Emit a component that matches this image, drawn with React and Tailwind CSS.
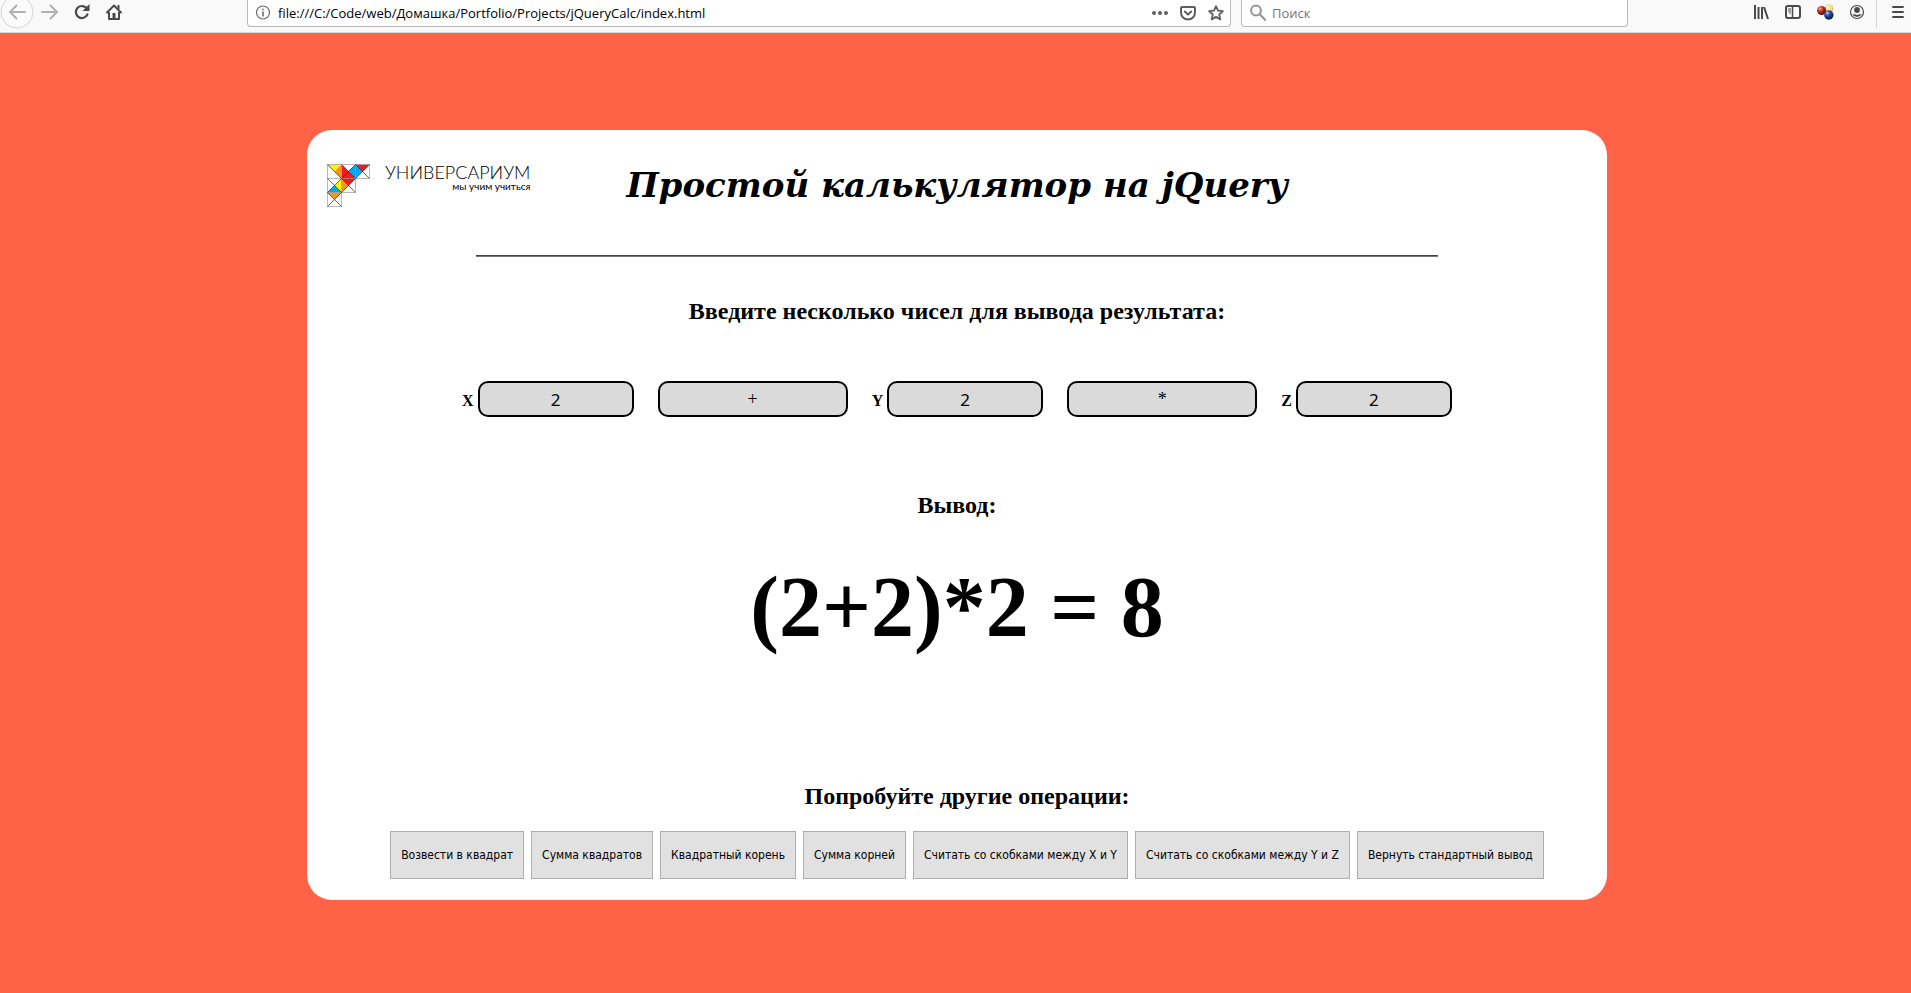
const sans = 'font-["Open_Sans",sans-serif]';

const iconButton = 'flex h-6 w-[26px] shrink-0 items-center justify-center text-[#4a4a4b]';

function NavIcons() {
  return (
    <nav aria-label="Навигация" className="flex w-[247px] shrink-0 items-start">
      <button type="button" aria-label="Назад" className="text-[#b1b1b1]">
        <svg width="34" height="30" viewBox="0 0 34 30" fill="none">
          <circle cx="17" cy="12" r="16" fill="#fbfbfb" stroke="#d4d4d4" />
          <path d="M25 12H10M16.500 5.500 10 12l6.500 6.500" stroke="currentColor" strokeWidth="2" strokeLinecap="round" strokeLinejoin="round" />
        </svg>
      </button>
      <button type="button" aria-label="Вперёд" className="ml-[7px] text-[#b1b1b1]">
        <svg width="17" height="24" viewBox="0 0 17 24" fill="none">
          <path d="M1 12h15M9.500 5.500 16 12l-6.500 6.500" stroke="currentColor" strokeWidth="2" strokeLinecap="round" strokeLinejoin="round" />
        </svg>
      </button>
      <button type="button" aria-label="Обновить" className="ml-4 text-[#4a4a4b]">
        <svg width="16" height="24" viewBox="0 0 16 24" fill="none">
          <path d="M12.800 8.500A6 6 0 1 0 13.400 14.500" stroke="currentColor" strokeWidth="2.200" strokeLinecap="round" />
          <path d="M15.500 4v7h-7z" fill="currentColor" />
        </svg>
      </button>
      <button type="button" aria-label="Домой" className="ml-4 text-[#4a4a4b]">
        <svg width="16" height="24" viewBox="0 0 16 24" fill="none" stroke="currentColor" strokeWidth="2">
          <path d="M1 12.500 8 5.500l7 7" strokeLinecap="round" strokeLinejoin="round" />
          <path d="M3 12v7h10v-7" strokeLinejoin="round" />
          <path d="M8 13v6M12.500 5v4" />
          <path d="M6.500 13h3v5h-3z" fill="currentColor" stroke="none" />
        </svg>
      </button>
    </nav>
  );
}

function AddressBar() {
  return (
    <div className="flex h-[27px] min-w-0 flex-1 items-center rounded-b-sm border border-t-0 border-[#b9b9b9] bg-white">
      <svg className="ml-[7px] shrink-0" width="16" height="16" viewBox="0 0 16 16" fill="none" stroke="#6a6a6a">
        <circle cx="8" cy="7.500" r="6.500" strokeWidth="1.200" />
        <path d="M8 6.500v5" strokeWidth="1.600" />
        <path d="M8 3.700v1.600" strokeWidth="1.600" />
      </svg>
      <input
        aria-label="Адрес"
        className={`ml-[7px] h-[26px] min-w-0 flex-1 bg-transparent text-[13px] text-black outline-none ${sans}`}
        defaultValue="file:///C:/Code/web/Домашка/Portfolio/Projects/jQueryCalc/index.html"
      />
      <button type="button" aria-label="Действия на странице" className="flex h-6 w-7 shrink-0 items-center justify-center">
        <svg width="16" height="16" viewBox="0 0 16 16" fill="#5f5f60">
          <circle cx="2" cy="8" r="2" /><circle cx="8" cy="8" r="2" /><circle cx="14" cy="8" r="2" />
        </svg>
      </button>
      <button type="button" aria-label="Сохранить" className="flex h-6 w-7 shrink-0 items-center justify-center">
        <svg width="16" height="16" viewBox="0 0 16 16" fill="none" stroke="#5f5f60" strokeWidth="2" strokeLinecap="round" strokeLinejoin="round">
          <path d="M2 2h12a1 1 0 0 1 1 1v4.500a7 7 0 0 1-14 0V3a1 1 0 0 1 1-1z" />
          <path d="M4.800 6.500 8 9.500l3.200-3" />
        </svg>
      </button>
      <button type="button" aria-label="Добавить в закладки" className="flex h-6 w-7 shrink-0 items-center justify-center">
        <svg width="16" height="16" viewBox="0 0 16 16" fill="none" stroke="#5f5f60" strokeWidth="1.800" strokeLinejoin="round">
          <path d="m8 1.200 2 4.500 4.900.500-3.700 3.300 1.100 4.900L8 11.900l-4.300 2.500 1.100-4.900L1.100 6.200 6 5.700z" />
        </svg>
      </button>
    </div>
  );
}

function SearchBar() {
  return (
    <div className="ml-[10px] flex h-[27px] w-[387px] items-center rounded-b-sm border border-t-0 border-[#b9b9b9] bg-white">
      <svg className="ml-2 shrink-0" width="16" height="18" viewBox="0 0 16 18" fill="none" stroke="#959595">
        <circle cx="6" cy="6.500" r="4.900" strokeWidth="2" />
        <path d="m9.800 10.300 5.500 5.700" strokeWidth="2.200" strokeLinecap="round" />
      </svg>
      <input
        aria-label="Поиск"
        placeholder="Поиск"
        className={`ml-[6px] h-[26px] min-w-0 flex-1 bg-transparent text-[13px] text-black outline-none placeholder:text-[#757575] ${sans}`}
      />
    </div>
  );
}

function ToolbarIcons() {
  return (
    <div className="flex w-[283px] shrink-0 justify-end">
      <button type="button" aria-label="Библиотека" className={iconButton}>
        <svg width="16" height="16" viewBox="0 0 16 16" fill="none" stroke="currentColor" strokeWidth="2">
          <path d="M2 1v14M5.500 3v12M9 3v12M11 3l4 12" />
        </svg>
      </button>
      <button type="button" aria-label="Боковая панель" className={`ml-[6px] ${iconButton}`}>
        <svg width="16" height="16" viewBox="0 0 16 16" fill="none" stroke="currentColor">
          <rect x="1" y="2" width="14" height="12" rx="2" strokeWidth="2" />
          <path d="M7.500 2v12" strokeWidth="1.500" />
          <path d="M3 5h3M3 7h3M4 9h2" />
        </svg>
      </button>
      <button type="button" aria-label="Расширение" className={`ml-[6px] ${iconButton}`}>
        <svg width="17" height="16" viewBox="0 0 17 16">
          <defs>
            <radialGradient id="ballRed" cx=".35" cy=".3" r=".75"><stop offset="0" stopColor="#ffb9a8" /><stop offset=".35" stopColor="#c6392a" /><stop offset="1" stopColor="#3a0906" /></radialGradient>
            <radialGradient id="ballGold" cx=".4" cy=".4" r=".75"><stop offset="0" stopColor="#fff6c8" /><stop offset=".6" stopColor="#f3d876" /><stop offset="1" stopColor="#a5842e" /></radialGradient>
            <radialGradient id="ballBlue" cx=".35" cy=".3" r=".75"><stop offset="0" stopColor="#b6cdfb" /><stop offset=".35" stopColor="#2b56b0" /><stop offset="1" stopColor="#06102e" /></radialGradient>
          </defs>
          <circle cx="12" cy="4.500" r="4.300" fill="url(#ballGold)" />
          <circle cx="4.600" cy="6.500" r="4.500" fill="url(#ballRed)" />
          <circle cx="11.800" cy="11" r="4.700" fill="url(#ballBlue)" />
        </svg>
      </button>
      <button type="button" aria-label="Аккаунт" className={`ml-[6px] ${iconButton}`}>
        <svg width="16" height="16" viewBox="0 0 16 16">
          <circle cx="8" cy="8" r="6.500" fill="none" stroke="currentColor" strokeWidth="1.200" />
          <circle cx="8" cy="6" r="2.900" fill="currentColor" />
          <path d="M3.500 10.200h2.300c1.200 1 3.200 1 4.400 0h2.300a5 5 0 0 1-9 0z" fill="currentColor" />
        </svg>
      </button>
      <div className="ml-[6px] h-[29px] w-px bg-[#d7d7d8]" />
      <button type="button" aria-label="Меню" className={`ml-2 ${iconButton}`}>
        <svg width="12" height="14" viewBox="0 0 12 14" stroke="currentColor" strokeWidth="2" strokeLinecap="round">
          <path d="M1 2h10M1 7h10M1 12h10" />
        </svg>
      </button>
    </div>
  );
}

function Logo() {
  return (
    <a href="#home" className="flex items-start gap-[15px] text-black">
      <svg className="shrink-0" width="43" height="43" viewBox="-0.5 -0.5 43 43">
        <g stroke="none">
          <path d="M0 0h14L7 7z" fill="#fff200" />
          <path d="M14 0v14L7 7z" fill="#f7941d" />
          <path d="M14 0l14 14-7 7-7-7z" fill="#ed1c24" />
          <path d="M28 0l7 7-7 7-7-7z" fill="#00a9ef" />
          <path d="M28 0h14l-7 7z" fill="#ed1c24" />
          <path d="M14 14v14l-7-7z" fill="#fff200" />
          <path d="M14 14v14l7-7z" fill="#f7941d" />
          <path d="M0 28h14l-7-7z" fill="#00a9ef" />
          <path d="M0 28h14l-7 7z" fill="#f7941d" />
        </g>
        <path d="M0 0h42v14H28v14H14v14H0zM14 0v28M28 0v14M0 14h28M0 28h14" fill="none" stroke="#9a9a9a" strokeWidth=".7" />
        <path d="M0 0l28 28M28 0L0 28M14 0l14 14M28 0l14 14M42 0L14 28M0 14l14 14M0 28l14 14M14 28L0 42" fill="none" stroke="#2b2b2b" strokeWidth=".7" />
      </svg>
      <span className='flex flex-col items-end font-["Lato",sans-serif]'>
        <span className="text-[18px] leading-4 font-light">УНИВЕРСАРИУМ</span>
        <span className="text-[10px] leading-3">мы учим учиться</span>
      </span>
    </a>
  );
}

const field = 'h-9 rounded-[10px] border-2 border-black bg-[#dadada] text-center text-black outline-none';

function NumberField({ label }) {
  return (
    <label className="flex items-baseline gap-1 text-[16px] font-bold">
      {label}
      <input
        type="text"
        inputMode="decimal"
        defaultValue="2"
        className={`w-[156px] font-["Noto_Sans",sans-serif] text-[17px] font-normal ${field}`}
      />
    </label>
  );
}

function OperatorField({ label, value }) {
  return (
    <select
      aria-label={label}
      defaultValue={value}
      className={`w-[190px] appearance-none font-["Liberation_Serif",serif] text-[18px] [text-align-last:center] ${field}`}
    >
      <option>+</option>
      <option>-</option>
      <option>*</option>
      <option>/</option>
    </select>
  );
}

const operations = [
  'Возвести в квадрат',
  'Сумма квадратов',
  'Квадратный корень',
  'Сумма корней',
  'Считать со скобками между X и Y',
  'Считать со скобками между Y и Z',
  'Вернуть стандартный вывод',
];

export default function App() {
  return (
    <div className='flex min-h-screen flex-col bg-[#ff6347] font-["Liberation_Serif",serif] text-black'>
      <header className="flex h-[33px] items-start overflow-hidden border-b border-[#d5d5d6] bg-[#f9f9fa]">
        <NavIcons />
        <AddressBar />
        <SearchBar />
        <ToolbarIcons />
      </header>

      <main className="flex justify-center pt-[97px] pb-[93px] pl-[3px]">
        <div className="flex w-[1300px] flex-col items-center rounded-[25px] bg-white pt-[34px] pb-[21px]">
          <div className="grid w-full grid-cols-[1fr_auto_1fr] items-start px-5">
            <Logo />
            <h1 className='font-["DejaVu_Serif",serif] text-[34px] leading-[42px] font-bold italic'>
              Простой калькулятор на jQuery
            </h1>
          </div>
          <hr className="mt-12 h-[2px] w-[74%] border-t border-b border-t-[#444] border-b-[#777]" />

          <h2 className="mt-10 text-[24px] leading-7 font-bold">Введите несколько чисел для вывода результата:</h2>
          <form className="mt-14 flex items-center justify-center gap-6">
            <NumberField label="X" />
            <OperatorField label="Первая операция" value="+" />
            <NumberField label="Y" />
            <OperatorField label="Вторая операция" value="*" />
            <NumberField label="Z" />
          </form>

          <h2 className="mt-[74px] text-[24px] leading-7 font-bold">Вывод:</h2>
          <output className="mt-10 text-[86px] leading-[96px] font-bold">(2+2)*2 = 8</output>

          <section className="mt-[127px] flex flex-col items-center pl-5">
            <h2 className="text-[24px] leading-7 font-bold">Попробуйте другие операции:</h2>
            <div className="mt-[21px] flex gap-[7px]">
              {operations.map((name) => (
                <button
                  key={name}
                  type="button"
                  className='h-12 border border-[#adadad] bg-[#e1e1e1] px-[10px] text-[12px] whitespace-nowrap font-["DejaVu_Sans_Condensed","DejaVu_Sans",sans-serif]'
                >
                  {name}
                </button>
              ))}
            </div>
          </section>
        </div>
      </main>
    </div>
  );
}
